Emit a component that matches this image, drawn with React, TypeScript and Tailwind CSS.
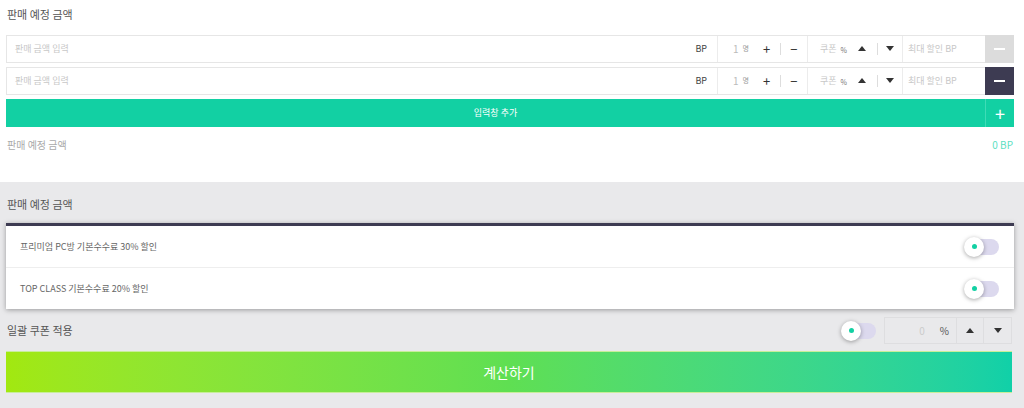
const font = { fontFamily: '"Noto Sans CJK KR", "Noto Sans", sans-serif' }

const Toggle = () => (
  <div className="relative h-[16px] w-[34px] rounded-full bg-[#dcd9ee]">
    <div className="absolute -left-[1px] -top-[2px] flex h-[20px] w-[20px] items-center justify-center rounded-full bg-white shadow-[0_1px_4px_rgba(0,0,0,0.35)]">
      <div className="h-[5px] w-[5px] rounded-full bg-[#12d0a3]" />
    </div>
  </div>
)

const Up = () => (
  <svg width="8" height="5" viewBox="0 0 8 5">
    <path d="M0 5 L4 0 L8 5 Z" fill="#333" />
  </svg>
)

const Down = () => (
  <svg width="8" height="5" viewBox="0 0 8 5">
    <path d="M0 0 L4 5 L8 0 Z" fill="#333" />
  </svg>
)

const InputRow = ({ active }: { active: boolean }) => (
  <div className="flex h-[28px] border border-[#e6e6e6] bg-white">
    <div className="flex flex-1 items-center justify-between pl-[8px] pr-[10px] border-r border-[#ececec]">
      <span className="text-[9px] text-[#c8c8c8]">판매 금액 입력</span>
      <span className="text-[9px] text-[#444]">BP</span>
    </div>
    <div className="flex w-[90px] items-center border-r border-[#ececec] pl-[15px] text-[#333]">
      <span className="text-[10px] text-[#bbb]">1</span>
      <span className="ml-[4px] text-[7px] text-[#999]">명</span>
      <span className="ml-[14px] text-[13px] leading-none">+</span>
      <span className="ml-[10px] h-[12px] w-px bg-[#ddd]" />
      <span className="ml-[9px] text-[13px] leading-none">−</span>
    </div>
    <div className="flex w-[95px] items-center border-r border-[#ececec] pl-[12px]">
      <span className="text-[9px] text-[#c8c8c8]">쿠폰</span>
      <span className="ml-[4px] mt-[3px] text-[7px] text-[#777]">%</span>
      <span className="ml-[11px] flex"><Up /></span>
      <span className="ml-[11px] h-[12px] w-px bg-[#ddd]" />
      <span className="ml-[8px] flex"><Down /></span>
    </div>
    <div className="flex w-[82px] items-center pl-[5px]">
      <span className="text-[9px] text-[#c8c8c8]">최대 할인 BP</span>
    </div>
    <div className={`flex w-[29px] items-center justify-center -my-px -mr-px ${active ? 'bg-[#3d3b52]' : 'bg-[#dcdcdc]'}`}>
      <span className="h-[2px] w-[11px] bg-white" />
    </div>
  </div>
)

export default function App() {
  return (
    <div style={font} className="h-[408px] w-[1024px] overflow-hidden bg-white">
      <div className="pl-[6px] pr-[10px] pt-[6px]">
        <div className="pl-[1px] text-[11px] text-[#555]">판매 예정 금액</div>
        <div className="mt-[12px] flex flex-col gap-[4px]">
          <InputRow active={false} />
          <InputRow active={true} />
          <div className="flex h-[28px] bg-[#12d0a3]">
            <div className="flex flex-1 items-center justify-center text-[9px] text-white">입력창 추가</div>
            <div className="flex w-[29px] items-center justify-center border-l border-[#3fdcb6] text-[18px] leading-none text-white">+</div>
          </div>
        </div>
        <div className="mt-[10px] flex items-center justify-between pl-[1px] pr-[1px]">
          <span className="text-[10px] text-[#aaa]">판매 예정 금액</span>
          <span className="text-[10px] text-[#5ee0c2]">0 BP</span>
        </div>
      </div>
      <div className="mt-[30px] h-[300px] bg-[#e9e9eb] pl-[6px] pr-[10px] pt-[14px]">
        <div className="pl-[1px] text-[11px] text-[#555]">판매 예정 금액</div>
        <div className="mt-[11px] border-t-[3px] border-[#3d3b52] bg-white shadow-[0_1px_5px_rgba(0,0,0,0.35)]">
          <div className="flex h-[42px] items-center justify-between border-b border-[#eee] pl-[14px] pr-[15px]">
            <span className="text-[9px] text-[#666]">프리미엄 PC방 기본수수료 30% 할인</span>
            <Toggle />
          </div>
          <div className="flex h-[41px] items-center justify-between pl-[14px] pr-[15px]">
            <span className="text-[9px] text-[#666]">TOP CLASS 기본수수료 20% 할인</span>
            <Toggle />
          </div>
        </div>
        <div className="mt-[8px] flex items-center justify-between">
          <span className="pl-[1px] text-[11px] text-[#555]">일괄 쿠폰 적용</span>
          <div className="mr-[2px] flex items-center">
            <Toggle />
            <div className="ml-[8px] flex h-[27px] w-[128px] border border-[#dedee0]">
              <div className="flex flex-1 items-center justify-end border-r border-[#dedee0] pr-[7px]">
                <span className="text-[10px] text-[#ccc]">0</span>
                <span className="ml-[15px] text-[10px] text-[#555]">%</span>
              </div>
              <div className="flex w-[27px] items-center justify-center border-r border-[#dedee0]"><Up /></div>
              <div className="flex w-[27px] items-center justify-center"><Down /></div>
            </div>
          </div>
        </div>
        <div className="mt-[7px] mr-[2px] flex h-[42px] items-center justify-center border-y border-[#c8ee9a] bg-gradient-to-r from-[#a2e80f] via-[#5fdf52] to-[#10d0a8] text-[14px] text-white">
          계산하기
        </div>
      </div>
    </div>
  )
}
